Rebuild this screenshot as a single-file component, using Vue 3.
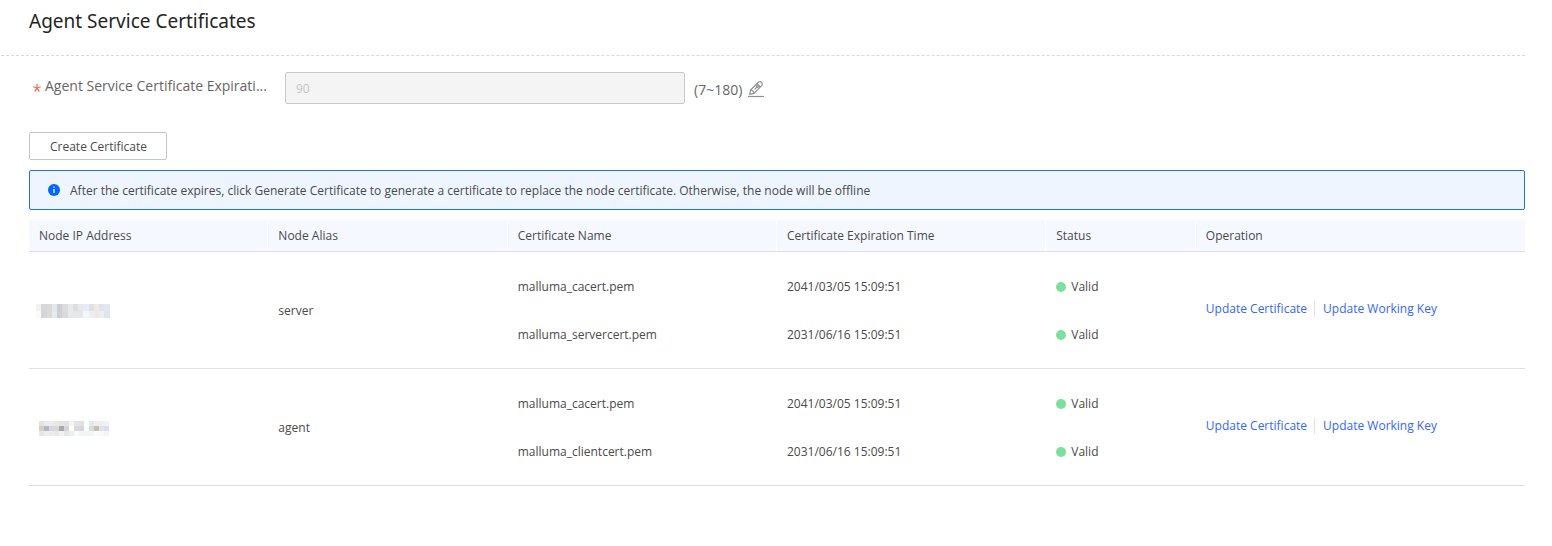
<script setup>
import { ref } from 'vue'

const days = ref(90)

const columns = [
  'Node IP Address',
  'Node Alias',
  'Certificate Name',
  'Certificate Expiration Time',
  'Status',
  'Operation',
]

const nodes = [
  {
    alias: 'server',
    mask: {
      x: 0,
      rowHeight: 7,
      rows: [
        ['#f7f3ec', '#d5d6de', '#dcdad5', '#e4e7ef', '#cfcfd1', '#dcdcda', '#e7e7ee', '#dddddd', '#e9e8e8', '#e6ecf3', '#dce1e3', '#f1e8e3', '#dfe3ea', '#e3e6ec'],
        ['#fdfbf7', '#d4d5dc', '#dbdad3', '#e5e9f1', '#cfced0', '#d8dadb', '#e9e8ef', '#e6e7e8', '#e8e6e7', '#f3f8fa', '#e8eef3', '#efe8e6', '#ebeff3', '#e0e3ea'],
      ],
    },
    certs: [
      { name: 'malluma_cacert.pem', time: '2041/03/05 15:09:51', status: 'Valid' },
      { name: 'malluma_servercert.pem', time: '2031/06/16 15:09:51', status: 'Valid' },
    ],
  },
  {
    alias: 'agent',
    mask: {
      x: 3,
      rowHeight: 5,
      rows: [
        ['#e6e2de', '#e9ebee', '#ebecf0', '#e9e9e8', '#e5e5e5', '#e0e2e7', '#f4f4f4', '#e5e5e8', '#e1e1e4', '#ffffff', '#e2e9e7', '#f3eeec', '#edeef2', '#f0f0f5'],
        ['#d4d0c5', '#b2b6c5', '#d7d6df', '#d9d7d9', '#aaaaac', '#d5d5db', '#fffefa', '#d8d8da', '#d6d6d9', '#ffffff', '#d5dfdf', '#c9bdb0', '#d9e4ef', '#dedde5'],
        ['#e5e4e8', '#efefef', '#ebebeb', '#e8e9e7', '#f3f3f6', '#e6e6ed', '#eeeeec', '#f6fbff', '#f2f5f6', '#f3f5f5', '#f0f5f6', '#fffaf5', '#f6fbff', '#f5f5f6'],
      ],
    },
    certs: [
      { name: 'malluma_cacert.pem', time: '2041/03/05 15:09:51', status: 'Valid' },
      { name: 'malluma_clientcert.pem', time: '2031/06/16 15:09:51', status: 'Valid' },
    ],
  },
]
</script>

<template>
  <main class="page">
    <header class="head">
      <h1>Agent Service Certificates</h1>
    </header>

    <div class="body">
      <div class="field">
        <svg class="star" width="8" height="8" viewBox="0 0 8 8" fill="none" stroke="#fa6a5e" aria-hidden="true">
          <path d="M4 0V4L0.2 2.8M4 4L7.8 2.8M4 4L1.7 7.6M4 4L6.3 7.6" stroke-width="1.2" />
        </svg>
        <label for="days">Agent Service Certificate Expirati...</label>
        <input id="days" v-model="days" type="text" disabled />
        <span class="range">(7~180)</span>
        <button class="edit" type="button" aria-label="Edit">
          <svg width="16" height="18" viewBox="0 0 16 18" fill="none" stroke="#8f8f8f" stroke-width="1.2">
            <path d="M1.7 14.3 L2.6 10 L10.5 2.1 Q12 .9 13.6 2.3 Q15.1 3.9 13.9 5.4 L6 13.3 Z" stroke-linejoin="round" />
            <path d="M9 3.6 L12.4 7 M2.6 10 Q5.4 10.2 6 13.3 M6.6 9.4 L8.6 7.4" />
            <circle cx="9.3" cy="6.5" r="1" />
            <path d="M0 16.5 H16" />
          </svg>
        </button>
      </div>

      <button class="create" type="button">Create Certificate</button>

      <div class="notice" role="note">
        <svg width="12" height="12" viewBox="0 0 12 12">
          <circle cx="6" cy="6" r="6" fill="#0067ff" />
          <path d="M5.3 2.5h1.4v1.3H5.3zM5.3 5h1.4v4H5.3z" fill="#dcebff" />
        </svg>
        <span>After the certificate expires, click Generate Certificate to generate a certificate to replace the node certificate. Otherwise, the node will be offline</span>
      </div>

      <table>
        <colgroup>
          <col class="w16" />
          <col class="w16" />
          <col class="w18" />
          <col class="w18" />
          <col class="w10" />
          <col class="w22" />
        </colgroup>
        <thead>
          <tr>
            <th v-for="c in columns" :key="c" scope="col">{{ c }}</th>
          </tr>
        </thead>
        <tbody>
          <tr v-for="node in nodes" :key="node.alias">
            <td class="address">
              <svg width="76" height="16" viewBox="0 0 76 16" shape-rendering="crispEdges" role="img" aria-label="Hidden address">
                <template v-for="(row, r) in node.mask.rows" :key="r">
                  <rect
                    v-for="(fill, i) in row"
                    :key="i"
                    :x="node.mask.x + i * (node.mask.x ? 5 : 5.25)"
                    :y="r * node.mask.rowHeight"
                    width="5.25"
                    :height="node.mask.rowHeight"
                    :fill="fill"
                  />
                </template>
              </svg>
            </td>
            <td>{{ node.alias }}</td>
            <td>
              <div v-for="c in node.certs" :key="c.name" class="line">{{ c.name }}</div>
            </td>
            <td>
              <div v-for="c in node.certs" :key="c.name" class="line">{{ c.time }}</div>
            </td>
            <td>
              <div v-for="c in node.certs" :key="c.name" class="line"><i class="dot"></i>{{ c.status }}</div>
            </td>
            <td>
              <div class="actions">
                <a href="#">Update Certificate</a>
                <a href="#">Update Working Key</a>
              </div>
            </td>
          </tr>
        </tbody>
      </table>
    </div>
  </main>
</template>

<style>
body {
  margin: 0;
  background: #fff;
}
</style>

<style scoped>
.page {
  padding: 0 27px 0 1px;
  font-family: "Open Sans", "Noto Sans", sans-serif;
  font-size: 12px;
  line-height: 16px;
  color: #4a4a4a;
}
.head {
  padding: 6px 28px 19px;
  border-bottom: 1px dashed #d8d8e2;
}
h1 {
  margin: 0;
  font-family: "Noto Sans", sans-serif;
  font-size: 19px;
  font-weight: 400;
  line-height: 30px;
  color: #252525;
}
.body {
  padding: 16px 0 0 28px;
}
.field {
  display: flex;
  align-items: center;
  height: 32px;
  font-size: 14px;
  color: #666;
}
.star {
  flex: none;
  padding: 0 4px;
}
label {
  flex: none;
  width: 220px;
  padding-bottom: 4px;
  white-space: nowrap;
}
input {
  box-sizing: border-box;
  flex: 0 1 400px;
  height: 32px;
  margin: 0 9px 0 20px;
  padding: 0 10px;
  border: 1px solid #c8c8c8;
  border-radius: 2px;
  background: #f4f4f4;
  color: #c4c4c4;
  font: inherit;
  font-size: 12px;
}
.range {
  padding-top: 4px;
}
.edit {
  display: flex;
  margin-left: 6px;
  padding: 2px 0 0;
  border: 0;
  background: none;
}
.create {
  display: block;
  height: 28px;
  margin-top: 28px;
  padding: 1px 19px 0 20px;
  border: 1px solid #c4c4c4;
  border-radius: 2px;
  background: #fff;
  color: inherit;
  font: inherit;
}
.notice {
  display: flex;
  align-items: center;
  gap: 10px;
  margin: 10px 0;
  padding: 10px 18px;
  border: 1px solid #1f73e3;
  border-radius: 2px;
  background: #eef5ff;
}
.notice span {
  padding-top: 2px;
}
table {
  width: 100%;
  table-layout: fixed;
  border-collapse: separate;
  border-spacing: 0;
}
.w16 {
  width: 16%;
}
.w18 {
  width: 18%;
}
.w10 {
  width: 10%;
}
.w22 {
  width: 22%;
}
th {
  height: 31px;
  padding: 0 10px;
  border-bottom: 1px solid #dfdfe1;
  background: #f5f8ff;
  font-weight: 400;
  text-align: left;
  box-shadow: inset -1px 0 #fff;
}
th:last-child {
  box-shadow: none;
}
td {
  height: 114px;
  padding: 2px 10px 0;
  border-bottom: 1px solid #dfdfe1;
}
.address {
  padding-left: 7px;
}
.address svg {
  display: block;
  padding-top: 1px;
}
.line {
  display: flex;
  align-items: center;
  height: 48px;
}
.dot {
  width: 10px;
  height: 10px;
  margin-right: 5px;
  border-radius: 50%;
  background: #7adfa0;
}
.actions {
  display: flex;
  align-items: center;
  padding-bottom: 4px;
}
a {
  color: #3366ff;
  text-decoration: none;
}
a + a {
  margin-left: 7px;
  padding-left: 8px;
  border-left: 1px solid #dfe1e6;
}
</style>
